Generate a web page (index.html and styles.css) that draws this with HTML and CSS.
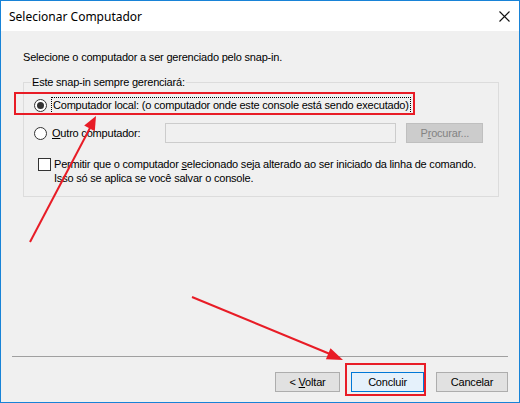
FILE: index.html
```html
<!DOCTYPE html>
<html lang="pt-BR">
<head>
<meta charset="utf-8">
<title>Selecionar Computador</title>
<link rel="stylesheet" href="styles.css">
</head>
<body>
<div class="screen">
  <div class="window">
    <div class="titlebar">
      <span class="title">Selecionar Computador</span>
      <svg class="close" width="11" height="11" viewBox="0 0 11 11"><path d="M0.5 0.5 L10.5 10.5 M10.5 0.5 L0.5 10.5" stroke="#111" stroke-width="1.1" fill="none"/></svg>
    </div>
    <div class="content">
      <p class="intro">Selecione o computador a ser gerenciado pelo snap-in.</p>
      <fieldset class="group">
        <legend class="group-title">Este snap-in sempre gerenciará:</legend>
        <div class="row row-local">
          <span class="radio checked"></span>
          <span class="label focus">Computador local: (o computador onde este console está sendo executado)</span>
        </div>
        <div class="row row-other">
          <span class="radio"></span>
          <span class="label label-other"><u>O</u>utro computador:</span>
          <span class="textbox"></span>
          <span class="btn btn-disabled"><span>P<u>r</u>ocurar...</span></span>
        </div>
        <div class="row row-check">
          <span class="checkbox"></span>
          <span class="check-text">Permitir que o computador <u>s</u>elecionado seja alterado ao ser iniciado da linha de comando.<br>Isso só se aplica se você salvar o console.</span>
        </div>
      </fieldset>
      <div class="spacer"></div>
      <div class="separator"></div>
      <div class="buttons">
        <span class="btn btn-back"><span>&lt; <u>V</u>oltar</span></span>
        <span class="btn btn-default"><span>Concluir</span></span>
        <span class="btn btn-cancel"><span>Cancelar</span></span>
      </div>
    </div>
  </div>
  <svg class="annotations" width="520" height="403" viewBox="0 0 520 403">
    <rect x="15" y="93" width="399" height="21" fill="none" stroke="#e81c26" stroke-width="2"/>
    <rect x="346" y="364" width="79" height="31" fill="none" stroke="#e81c26" stroke-width="2"/>
    <line x1="30" y1="242" x2="90" y2="128" stroke="#e81c26" stroke-width="2"/>
    <polygon points="96,116 94.8,131.2 84.2,125.6" fill="#e81c26"/>
    <line x1="192" y1="297" x2="330" y2="354" stroke="#e81c26" stroke-width="2"/>
    <polygon points="343,360 325.9,359.3 330.5,348.3" fill="#e81c26"/>
  </svg>
</div>
</body>
</html>
```
FILE: styles.css
```css
html, body {
  margin: 0;
  padding: 0;
  background: #f0f0f0;
}

.screen {
  position: relative;
  width: 520px;
  height: 403px;
}

.window {
  box-sizing: border-box;
  width: 520px;
  height: 403px;
  border: 1px solid #1883d7;
  background: #f0f0f0;
  display: flex;
  flex-direction: column;
  font-family: "Liberation Sans", Arial, sans-serif;
  font-size: 11px;
  line-height: 13px;
  letter-spacing: -0.2px;
  color: #000;
}

.titlebar {
  height: 30px;
  flex: 0 0 30px;
  background: #fff;
  display: flex;
  align-items: center;
  justify-content: space-between;
  padding: 0 9px 0 8px;
  letter-spacing: 0;
}

.title {
  font-family: "Noto Sans", "Open Sans", sans-serif;
  font-size: 12px;
  color: #000;
}

.close {
  display: block;
  margin-top: 1px;
}

.content {
  flex: 1;
  display: flex;
  flex-direction: column;
  padding: 20px 0 10px 0;
}

.intro {
  margin: 0 0 0 22px;
}

.group {
  margin: 12px 0 0 22px;
  width: 476px;
  box-sizing: border-box;
  border: 1px solid #dcdcdc;
  padding: 8px 4px 11px 10px;
  min-width: 0;
}

.group-title {
  padding: 0 1px;
  margin-left: -3px;
}

.row {
  display: flex;
  align-items: center;
}

.row-local {
  height: 17px;
}

.row-other {
  height: 20px;
  margin-top: 9px;
}

.row-check {
  align-items: flex-start;
  margin-top: 14px;
  padding-left: 4px;
}

.radio {
  box-sizing: border-box;
  width: 13px;
  height: 13px;
  border: 1px solid #333;
  border-radius: 50%;
  background: #fff;
  display: flex;
  align-items: center;
  justify-content: center;
  flex: 0 0 13px;
}

.radio.checked::after {
  content: "";
  width: 7px;
  height: 7px;
  border-radius: 50%;
  background: #333;
}

.label {
  margin-left: 4px;
  white-space: nowrap;
}

.focus {
  border: 1px dotted #000;
  padding: 1px 1px;
  margin-left: 4px;
}

.label-other {
  margin-left: 5px;
}

.textbox {
  box-sizing: border-box;
  width: 231px;
  height: 20px;
  border: 1px solid #cccccc;
  background: #f0f0f0;
  margin-left: 25px;
}

.btn {
  box-sizing: border-box;
  height: 20px;
  display: flex;
  align-items: center;
  justify-content: center;
  background: #e1e1e1;
  border: 1px solid #adadad;
  white-space: nowrap;
}

.btn-disabled {
  width: 77px;
  margin-left: 10px;
  background: #cccccc;
  border-color: #bfbfbf;
  color: #838383;
}

.checkbox {
  box-sizing: border-box;
  width: 13px;
  height: 13px;
  flex: 0 0 13px;
  border: 1px solid #333;
  background: #fff;
  margin-top: 1px;
}

.check-text {
  margin-left: 3px;
  line-height: 14px;
  white-space: nowrap;
}

.spacer {
  flex: 1;
}

.separator {
  height: 1px;
  background: #a0a0a0;
  margin: 0 11px;
}

.buttons {
  display: flex;
  justify-content: flex-end;
  margin-top: 15px;
  padding-right: 11px;
}

.btn-back {
  width: 65px;
  margin-right: 11px;
}

.btn-default {
  width: 73px;
  margin-right: 12px;
  background: #e5f1fb;
  border-color: #0078d7;
}

.btn-cancel {
  width: 72px;
}

.annotations {
  position: absolute;
  top: 0;
  left: 0;
  pointer-events: none;
}
```
